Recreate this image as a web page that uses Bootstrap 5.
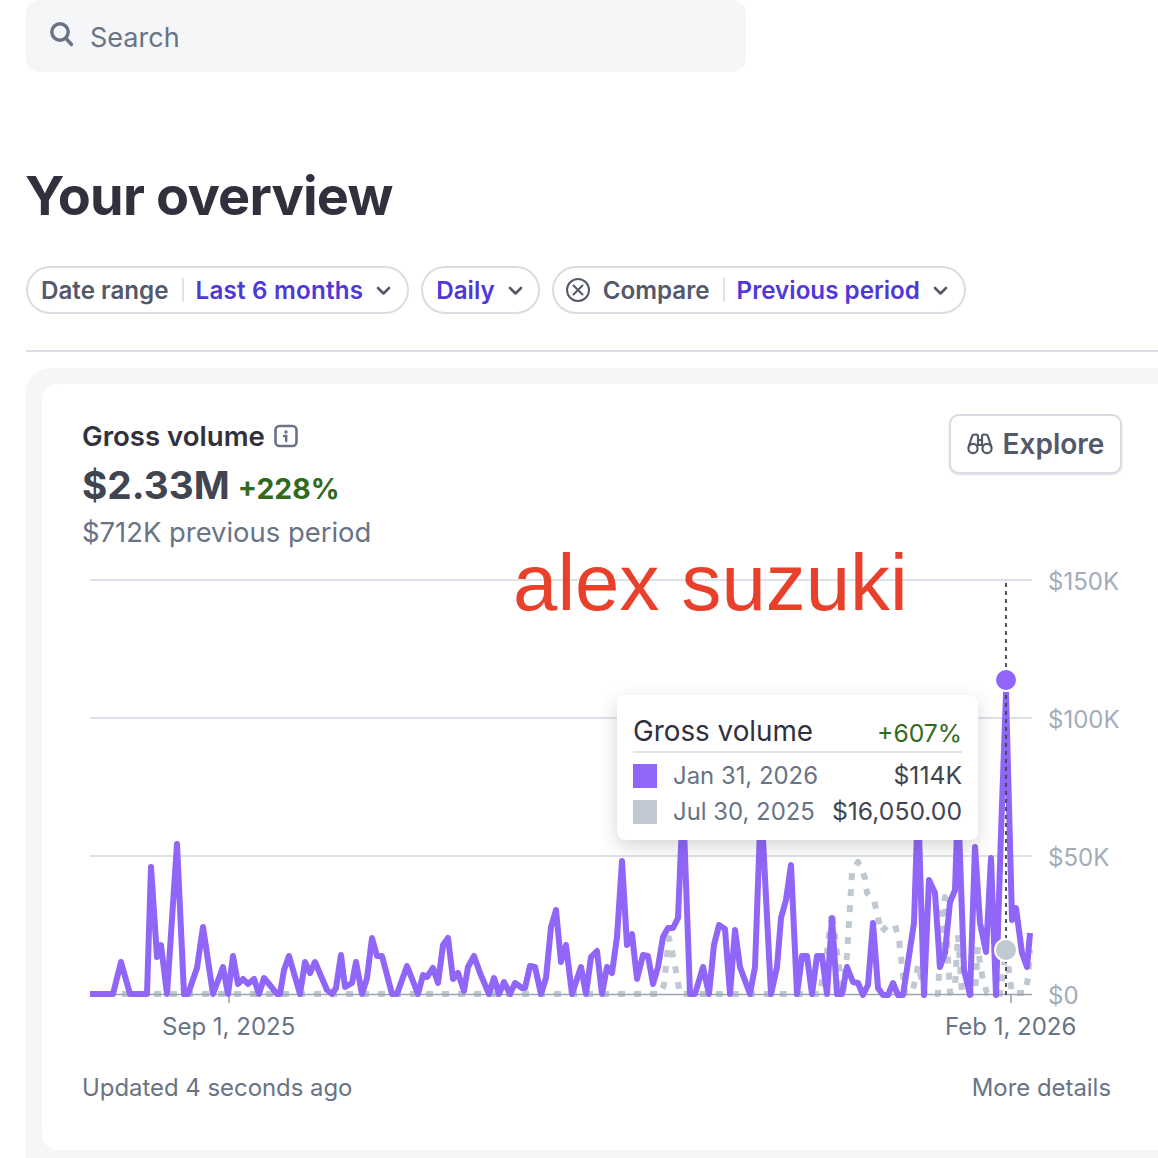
<!DOCTYPE html>
<html lang="en">
<head>
  <meta charset="UTF-8">
  <title>Your overview</title>
  <link href="https://cdn.jsdelivr.net/npm/bootstrap@5.3.0/dist/css/bootstrap.min.css" rel="stylesheet">
  <style>
    html, body { height: 1158px; overflow: hidden; }
    body { font-family: Inter, "Liberation Sans", sans-serif; color: #30313d; background: #fff; }
    .page-wrap { padding-left: 26px; }
    .search-box { width: 720px; height: 72px; background: #f5f6f8; border-radius: 14px; padding-left: 22px; gap: 14px; color: #687385; font-size: 27px; }
    .search-box svg { margin-top: -3px; }
    .search-box span { margin-top: 4px; }
    .page-title { font-size: 54px; font-weight: 700; letter-spacing: -0.8px; line-height: 64px; color: #30313d; margin: 92px 0 0 -1px; }
    .filter-row { margin-top: 38px; gap: 12px; }
    .filter-pill { height: 48px; border: 2px solid #d8dde3; border-radius: 24px; padding: 2px 16px 0 13px; font-size: 24.200px; font-weight: 600; color: #545969; }
    .pill-tight { padding-right: 15px; }
    .pill-sep { width: 2px; height: 24px; background: #dfe3e8; margin: 0 12px 2px 13px; }
    .pill-value { color: #4f37dc; }
    .pill-value-wide { letter-spacing: .2px; }
    .pill-chev { margin-left: 13px; }
    .pill-close { margin: -2px 12px 0 -2px; }
    .page-rule { height: 2px; background: #d8dee4; margin: 36px 0 16px; }
    .outer-panel { background: #f5f6f8; border-radius: 24px 0 0 0; padding: 16px; margin-right: -40px; }
    .inner-panel { background: #fff; border-radius: 16px; height: 766px; padding: 28px 60px 0 40px; }
    .metric-name { font-size: 27.600px; font-weight: 600; line-height: 48px; gap: 9px; color: #30313d; }
    .metric-value { font-size: 38.700px; font-weight: 700; line-height: 50px; color: #414552; }
    .metric-delta { font-size: 28.400px; font-weight: 700; color: #33691e; margin-left: 8px; }
    .metric-prev { font-size: 27.400px; color: #687385; line-height: 42px; }
    .explore-btn { height: 60px; width: 173px; border: 2px solid #d8dde3; border-radius: 10px; box-shadow: 0 1px 2px rgba(60,66,87,.18); gap: 10px; font-size: 28px; font-weight: 600; color: #545969; background: #fff; padding: 0; margin-top: 2px; }
    .chart-area { position: relative; width: 1039px; height: 490px; margin: 7px 0 0 1px; }
    .chart-area svg { display: block; }
    .axis-text { font-family: Inter, "Liberation Sans", sans-serif; font-size: 24px; fill: #a3acba; }
    .date-text { font-family: Inter, "Liberation Sans", sans-serif; font-size: 24px; fill: #687385; }
    .name-tag { position: absolute; left: 430px; top: -22px; font-family: "Liberation Sans", sans-serif; font-size: 79.800px; line-height: 90px; color: #e8402a; white-space: nowrap; }
    .tip-box { position: absolute; left: 534px; top: 135px; width: 361px; height: 145px; background: #fff; border-radius: 8px; box-shadow: 0 6px 18px rgba(48,49,61,.2); padding: 14px 16px 0 16px; }
    .tip-head { border-bottom: 2px solid #dfe3e8; height: 44px; padding-top: 3px; font-size: 27.800px; line-height: 38px; color: #30313d; }
    .tip-delta { color: #33691e; font-size: 24.700px; margin-top: 2px; }
    .tip-line { height: 36px; font-size: 23.900px; color: #687385; }
    .tip-head + .tip-line { margin-top: 5px; }
    .tip-swatch { width: 24px; height: 24px; margin-right: 16px; }
    .tip-amount { margin-left: auto; color: #414552; font-size: 24.700px; }
    .foot-row { font-size: 23.900px; color: #687385; padding-right: 11px; margin-top: 20px; }
  </style>
</head>
<body>
  <div class="page-wrap">
    <div class="search-box d-flex align-items-center">
      <svg width="28" height="28" viewBox="0 0 28 28" fill="none" stroke="#687385" stroke-width="3.400" stroke-linecap="round"><circle cx="12" cy="11" r="8.200"/><path d="M18 17.500l5.500 6"/></svg>
      <span>Search</span>
    </div>

    <h1 class="page-title">Your overview</h1>

    <div class="filter-row d-flex">
      <div class="filter-pill d-flex align-items-center">
        <span>Date range</span><span class="pill-sep"></span><span class="pill-value pill-value-wide">Last 6 months</span>
        <svg class="pill-chev" width="15" height="10" viewBox="0 0 15 10" fill="none" stroke="#545969" stroke-width="2.600" stroke-linecap="round" stroke-linejoin="round"><path d="M2 2l5.500 5.500L13 2"/></svg>
      </div>
      <div class="filter-pill pill-tight d-flex align-items-center">
        <span class="pill-value">Daily</span>
        <svg class="pill-chev" width="15" height="10" viewBox="0 0 15 10" fill="none" stroke="#545969" stroke-width="2.600" stroke-linecap="round" stroke-linejoin="round"><path d="M2 2l5.500 5.500L13 2"/></svg>
      </div>
      <div class="filter-pill d-flex align-items-center">
        <svg class="pill-close" width="26" height="26" viewBox="0 0 26 26" fill="none" stroke="#545969" stroke-width="2" stroke-linecap="round"><circle cx="13" cy="13" r="11"/><path d="M8.500 8.500l9 9M17.500 8.500l-9 9"/></svg>
        <span>Compare</span><span class="pill-sep"></span><span class="pill-value">Previous period</span>
        <svg class="pill-chev" width="15" height="10" viewBox="0 0 15 10" fill="none" stroke="#545969" stroke-width="2.600" stroke-linecap="round" stroke-linejoin="round"><path d="M2 2l5.500 5.500L13 2"/></svg>
      </div>
    </div>

    <div class="page-rule"></div>

    <div class="outer-panel">
      <div class="inner-panel">
        <div class="d-flex justify-content-between align-items-start">
          <div>
            <div class="metric-name d-flex align-items-center">
              <span>Gross volume</span>
              <svg width="24" height="24" viewBox="0 0 24 24" fill="none" stroke="#687385"><rect x="1.500" y="2" width="21" height="20" rx="4" stroke-width="2.600"/><circle cx="12" cy="8" r="1.700" fill="#687385" stroke="none"/><path d="M10 12h2.200v5" stroke-width="2.400" stroke-linecap="round"/></svg>
            </div>
            <div class="d-flex align-items-baseline">
              <span class="metric-value">$2.33M</span><span class="metric-delta">+228%</span>
            </div>
            <div class="metric-prev">$712K previous period</div>
          </div>
          <button type="button" class="btn explore-btn d-flex align-items-center justify-content-center">
            <svg width="26" height="22" viewBox="0 0 26 22" fill="none" stroke="#545969" stroke-width="2.200" stroke-linejoin="round"><circle cx="6" cy="15.500" r="4.600"/><circle cx="20" cy="15.500" r="4.600"/><path d="M1.600 14L5 3.500Q5.500 1.500 8 1.500H9Q11 1.500 11 3.500V13M24.400 14L21 3.500Q20.500 1.500 18 1.500H17Q15 1.500 15 3.500V13M11 7h4M11 12h4"/></svg>
            <span>Explore</span>
          </button>
        </div>

        <div class="chart-area">
          <svg width="1039" height="490" viewBox="83 560 1039 490">
            <g stroke="#dde1e9" stroke-width="2">
              <path d="M90 580H1032M90 718H1032M90 856H1032"/>
            </g>
            <g class="axis-labels">
              <text class="axis-text" x="1048" y="590">$150K</text>
              <text class="axis-text" x="1048" y="728">$100K</text>
              <text class="axis-text" x="1048" y="866">$50K</text>
              <text class="axis-text" x="1048" y="1004">$0</text>
              <text class="date-text" x="162" y="1035">Sep 1, 2025</text>
              <text class="date-text" x="945" y="1035">Feb 1, 2026</text>
            </g>
            <!-- previous period -->
            <polyline fill="none" stroke="#c0c8d2" stroke-width="6" stroke-dasharray="7 9" stroke-linejoin="round" points="90,994 660,994 664,985 669,938 674,960 680,994 820,994 827,950 832,912 838,960 843,994 847,955 852,873 858,862 865,878 867,893 874,900 878,917 881,932 887,926 895,925 899,940 901,957 905,993 912,993 916,977 918,965 925,994 938,994 942,912 945,897 948,960 950,993 955,985 958,935 962,994 975,994 978,947 980,963 983,980 987,993 1000,994 1006,950 1010,978 1012,993 1025,993 1028,978 1030,950"/>
            <path d="M90 994.500H1032M229 995v8M1011 995v8" stroke="#9aa3b0" stroke-width="1.600" fill="none"/>
            <!-- current period -->
            <polyline fill="none" stroke="#8f66f7" stroke-width="6" stroke-linejoin="round" points="90,994 113,994 121,962 130,994 147,994 151,867 157,957 161,945 167,994 177,844 184,994 188,994 197,968 203,927 213,994 223,967 228,994 233,956 238,984 243,979 248,984 254,979 259,994 264,978 269,984 277,994 280,994 284,970 289,956 300,994 305,962 310,973 315,962 327,990 332,994 336,988 341,955 345,987 352,983 356,962 362,994 367,978 372,938 377,956 382,956 392,994 397,994 407,966 418,994 423,975 427,977 433,968 438,983 443,945 448,938 453,979 458,973 464,991 468,967 474,956 480,973 489,994 494,978 499,994 504,982 510,994 515,983 522,988 525,988 530,966 535,967 541,994 546,978 551,927 556,910 561,962 566,945 572,994 581,967 586,994 591,957 597,951 602,994 607,967 612,973 617,937 622,861 627,945 632,934 637,979 643,955 648,956 653,984 658,967 663,937 668,928 673,928 678,918 683,800 690,994 695,994 703,967 709,994 714,945 719,925 725,929 730,994 735,930 740,967 750,994 755,967 761,800 771,994 777,967 781,918 786,900 791,865 797,994 802,956 807,956 812,994 817,956 822,956 827,994 832,918 837,994 842,994 847,967 853,982 858,983 863,995 868,985 873,923 878,988 883,995 888,995 893,983 898,995 903,995 914,923 918,800 924,995 929,880 935,893 940,967 945,953 950,902 955,890 958,800 964,970 970,995 975,847 980,923 986,952 991,858 996,995 1001,833 1006,693 1012,920 1016,908 1022,953 1027,967 1030,933"/>
            <path d="M1006 583V995" stroke="#414552" stroke-width="1.800" stroke-dasharray="4 4"/>
            <circle cx="1006" cy="680" r="11" fill="#8f66f7" stroke="#fff" stroke-width="2"/>
            <circle cx="1006" cy="950" r="11" fill="#c0c8d2" stroke="#fff" stroke-width="2"/>
          </svg>
          <div class="name-tag">alex suzuki</div>
          <div class="tip-box">
            <div class="tip-head d-flex justify-content-between align-items-start">
              <span>Gross volume</span><span class="tip-delta">+607%</span>
            </div>
            <div class="tip-line d-flex align-items-center">
              <span class="tip-swatch" style="background:#8f66f7"></span><span>Jan 31, 2026</span><span class="tip-amount">$114K</span>
            </div>
            <div class="tip-line d-flex align-items-center">
              <span class="tip-swatch" style="background:#c0c8d2"></span><span>Jul 30, 2025</span><span class="tip-amount">$16,050.00</span>
            </div>
          </div>
        </div>

        <div class="foot-row d-flex justify-content-between">
          <span>Updated 4 seconds ago</span><span>More details</span>
        </div>
      </div>
    </div>
  </div>
</body>
</html>
